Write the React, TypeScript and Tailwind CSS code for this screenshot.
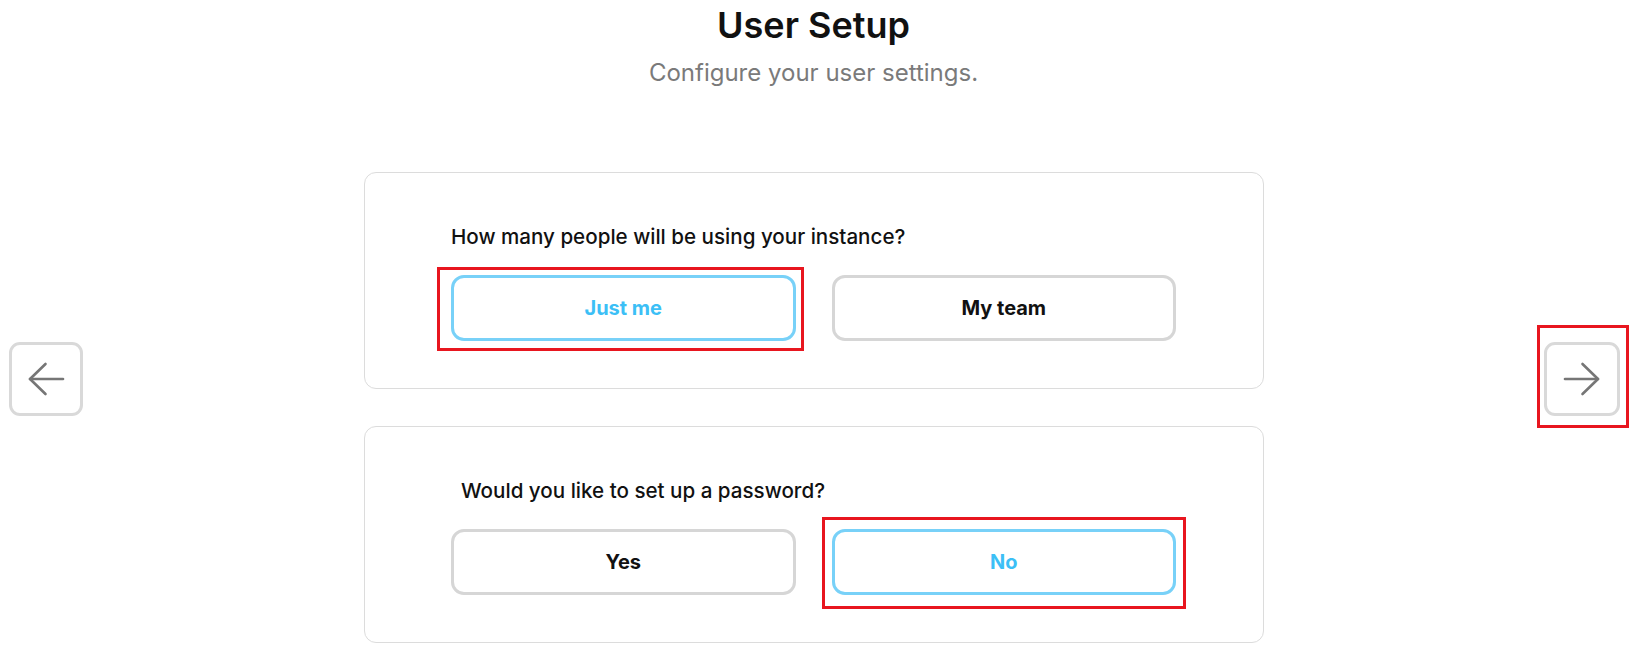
import React, { useState } from "react";

const font = { fontFamily: "Inter, 'Noto Sans', sans-serif" };

function Arrow({ dir }: { dir: "left" | "right" }) {
  return (
    <svg width="38" height="34" viewBox="0 0 38 34" fill="none" stroke="#767676" strokeWidth="2.6" strokeLinecap="round" strokeLinejoin="round">
      {dir === "left" ? (
        <>
          <path d="M3 17H36" />
          <path d="M18.5 2 3 17l15.5 15" />
        </>
      ) : (
        <>
          <path d="M35 17H2" />
          <path d="M19.5 2 35 17 19.5 32" />
        </>
      )}
    </svg>
  );
}

function Choice({
  label,
  selected,
  onClick,
  mark,
}: {
  label: string;
  selected: boolean;
  onClick: () => void;
  mark?: "a" | "b";
}) {
  return (
    <div className="relative">
      <button
        onClick={onClick}
        className={
          "flex h-[66px] w-full items-center justify-center rounded-[13px] border-[3px] bg-white text-[20px] font-bold " +
          (selected ? "border-[#78d1f8] text-[#3cbff6]" : "border-[#d6d6d6] text-[#111111]")
        }
      >
        {label}
      </button>
      {mark === "a" && (
        <div className="pointer-events-none absolute left-[-14px] right-[-8px] top-[-8px] bottom-[-10px] border-[3px] border-[#e8161f]" />
      )}
      {mark === "b" && (
        <div className="pointer-events-none absolute left-[-10px] right-[-10px] top-[-12px] bottom-[-14px] border-[3px] border-[#e8161f]" />
      )}
    </div>
  );
}

export default function App() {
  const [people, setPeople] = useState<"me" | "team">("me");
  const [pw, setPw] = useState<"yes" | "no">("no");

  return (
    <div className="min-h-screen w-full bg-white" style={font}>
      <div className="flex w-full items-center justify-between px-[9px]">
        <button className="flex h-[74px] w-[74px] shrink-0 items-center justify-center rounded-[11px] border-[3px] border-[#d9d9d9] bg-white">
          <Arrow dir="left" />
        </button>

        <div className="flex flex-1 flex-col items-center pb-[114px]">
          <h1 className="mt-[5px] text-4xl font-semibold leading-10 text-[#111111]">User Setup</h1>
          <p className="mt-[12px] text-2xl font-normal leading-8 text-[#7a7a7a]">Configure your user settings.</p>

          <div className="mt-[83px] flex w-[900px] flex-col gap-[37px]">
            <div className="rounded-[12px] border border-[#dcdcdc] bg-white pt-[50px] pb-[47px]">
              <div className="mx-auto w-[725px]">
                <p className="text-[20.6px] font-medium leading-7 text-[#111111]">How many people will be using your instance?</p>
                <div className="mt-[24px] grid grid-cols-2 gap-9">
                  <Choice label="Just me" selected={people === "me"} onClick={() => setPeople("me")} mark="a" />
                  <Choice label="My team" selected={people === "team"} onClick={() => setPeople("team")} />
                </div>
              </div>
            </div>

            <div className="rounded-[12px] border border-[#dcdcdc] bg-white pt-[50px] pb-[47px]">
              <div className="mx-auto w-[725px]">
                <p className="ml-[10px] text-[20.6px] font-medium leading-7 text-[#111111]">Would you like to set up a password?</p>
                <div className="mt-[24px] grid grid-cols-2 gap-9">
                  <Choice label="Yes" selected={pw === "yes"} onClick={() => setPw("yes")} />
                  <Choice label="No" selected={pw === "no"} onClick={() => setPw("no")} mark="b" />
                </div>
              </div>
            </div>
          </div>
        </div>

        <div className="relative shrink-0">
          <button className="flex h-[74px] w-[76px] items-center justify-center rounded-[11px] border-[3px] border-[#d9d9d9] bg-white">
            <Arrow dir="right" />
          </button>
          <div className="pointer-events-none absolute left-[-7px] right-[-9px] top-[-17px] bottom-[-12px] border-[3px] border-[#e8161f]" />
        </div>
      </div>
    </div>
  );
}
